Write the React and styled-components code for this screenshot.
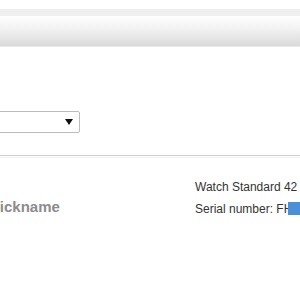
import styled, { createGlobalStyle } from "styled-components";

const Global = createGlobalStyle`
  html, body {
    margin: 0;
    padding: 0;
    background: #fff;
    overflow: hidden;
  }
  body {
    font-family: "Liberation Sans", Arial, sans-serif;
    color: #333;
  }
`;

const Page = styled.div`
  width: 300px;
  height: 300px;
  padding-top: 9px;
  box-sizing: border-box;
`;

const TopStrip = styled.div`
  height: 7px;
  background: #efefef;
`;

const Header = styled.div`
  height: 30px;
  background: linear-gradient(#fefefe, #f3f3f3 40%, #dadada);
  border-bottom: 1px solid #e9e9e9;
`;

const Content = styled.div`
  margin-left: -11px;
  padding-top: 64px;
`;

const SelectBox = styled.div`
  width: 119px;
  height: 22px;
  margin-left: -28px;
  box-sizing: border-box;
  border: 1px solid #bcbcbc;
  border-radius: 2px;
  background: #fff;
  display: flex;
  align-items: center;
  justify-content: flex-end;
  padding-right: 6px;
`;

const Arrow = styled.span`
  width: 0;
  height: 0;
  border-left: 4px solid transparent;
  border-right: 4px solid transparent;
  border-top: 6px solid #111;
`;

const Divider = styled.div`
  margin-top: 22px;
  margin-left: 11px;
  height: 1px;
  border-top: 1px solid #cdcdcd;
  border-bottom: 1px solid #f0f0f0;
`;

const DetailRow = styled.div`
  display: flex;
  align-items: flex-start;
  margin-top: 21px;
`;

const Label = styled.div`
  width: 206px;
  padding-top: 19px;
  font-size: 15px;
  line-height: 18px;
  font-weight: bold;
  color: #8c8c8c;
`;

const Info = styled.div`
  display: flex;
  flex-direction: column;
  gap: 6px;
  font-size: 12px;
  line-height: 16px;
  color: #333;
  white-space: nowrap;
`;

const Line = styled.div`
  position: relative;
`;

const Redact = styled.span`
  position: absolute;
  left: 93px;
  top: 1px;
  width: 16px;
  height: 13px;
  background: #4a8fd8;
`;

export default function App() {
  return (
    <>
      <Global />
      <Page>
        <TopStrip />
        <Header />
        <Content>
          <SelectBox>
            <Arrow />
          </SelectBox>
          <Divider />
          <DetailRow>
            <Label>Nickname</Label>
            <Info>
              <Line>Watch Standard 42</Line>
              <Line>
                Serial number: FH
                <Redact />
              </Line>
            </Info>
          </DetailRow>
        </Content>
      </Page>
    </>
  );
}
